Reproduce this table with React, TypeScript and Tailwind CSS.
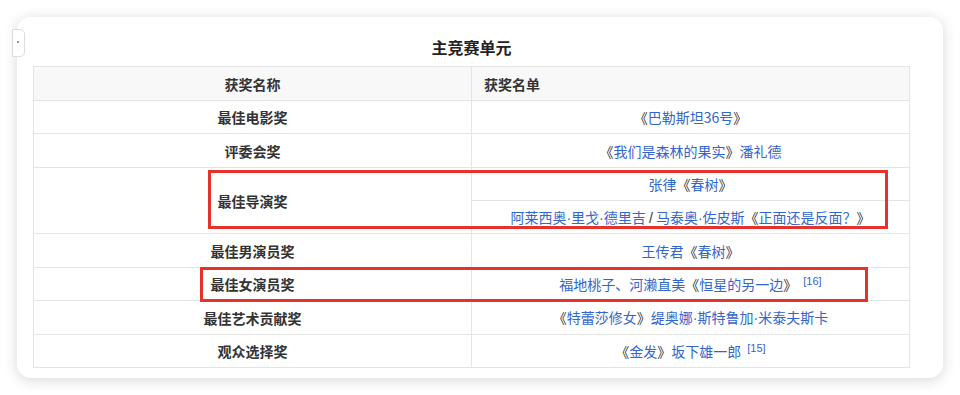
const font = { fontFamily: '"Noto Sans CJK SC", "Noto Sans", sans-serif' };
const latin = { fontFamily: '"Liberation Sans", sans-serif' };

type Part = { t: string; link?: boolean };

const rows: { award: string; lines: Part[][]; sup?: string[] }[] = [
  { award: "最佳电影奖", lines: [[{ t: "《" }, { t: "巴勒斯坦36号", link: true }, { t: "》" }]] },
  {
    award: "评委会奖",
    lines: [[{ t: "《" }, { t: "我们是森林的果实", link: true }, { t: "》" }, { t: "潘礼德", link: true }]],
  },
  {
    award: "最佳导演奖",
    lines: [
      [{ t: "张律", link: true }, { t: "《" }, { t: "春树", link: true }, { t: "》" }],
      [
        { t: "阿莱西奥·里戈·德里吉", link: true },
        { t: " / " },
        { t: "马泰奥·佐皮斯", link: true },
        { t: "《" },
        { t: "正面还是反面？", link: true },
        { t: "》" },
      ],
    ],
  },
  {
    award: "最佳男演员奖",
    lines: [[{ t: "王传君", link: true }, { t: "《" }, { t: "春树", link: true }, { t: "》" }]],
  },
  {
    award: "最佳女演员奖",
    lines: [[{ t: "福地桃子、河濑直美", link: true }, { t: "《" }, { t: "恒星的另一边", link: true }, { t: "》" }]],
    sup: ["[16]"],
  },
  {
    award: "最佳艺术贡献奖",
    lines: [[{ t: "《" }, { t: "特蕾莎修女", link: true }, { t: "》" }, { t: "缇奥娜·斯特鲁加·米泰夫斯卡", link: true }]],
  },
  {
    award: "观众选择奖",
    lines: [[{ t: "《" }, { t: "金发", link: true }, { t: "》" }, { t: "坂下雄一郎", link: true }]],
    sup: ["[15]"],
  },
];

// middle dots and slashes look narrow in the source, so set them in a latin face
function withDots(s: string) {
  return s.split(/([·/])/).map((seg, i) =>
    seg === "·" || seg === "/" ? (
      <span key={i} style={latin}>
        {seg}
      </span>
    ) : (
      seg
    )
  );
}

function Line({ parts, sup }: { parts: Part[]; sup?: string }) {
  return (
    <span>
      {parts.map((p, i) =>
        p.link ? (
          <a key={i} className="text-[#3366cc]">
            {withDots(p.t)}
          </a>
        ) : (
          <span key={i} className="text-[#333]">
            {withDots(p.t)}
          </span>
        )
      )}
      {sup && (
        <sup className="ml-[6px] text-[11px] text-[#3366cc] relative -top-[5px]" style={latin}>
          {sup}
        </sup>
      )}
    </span>
  );
}

export default function App() {
  return (
    <div className="w-[960px] h-[395px] bg-white p-[17px] relative overflow-hidden" style={font}>
      <div className="relative w-[926px] h-[361px] bg-white rounded-[14px] shadow-[0_2px_14px_rgba(0,0,0,0.16)] pl-[16px] pt-[18px]">
        <div className="w-[877px]">
          <div className="text-center text-[16px] leading-[24px] font-bold text-[#222]">主竞赛单元</div>
          <table className="mt-[7px] w-full border-collapse table-fixed text-[14px] leading-[20px]">
            <thead>
              <tr className="h-[34px] bg-[#f8f8f8]">
                <th className="w-1/2 border border-[#e4e4e4] text-center font-bold text-[#333]">获奖名称</th>
                <th className="w-1/2 border border-[#e4e4e4] text-left pl-[12px] font-bold text-[#333]">获奖名单</th>
              </tr>
            </thead>
            <tbody>
              {rows.map((r, ri) =>
                r.lines.map((l, li) => (
                  <tr key={`${ri}-${li}`} className={ri % 2 === 0 ? "h-[33px]" : "h-[34px]"}>
                    {li === 0 && (
                      <td rowSpan={r.lines.length} className="border border-[#e4e4e4] text-center font-bold text-[#333]">
                        {r.award}
                      </td>
                    )}
                    <td className="border border-[#e4e4e4] text-center">
                      <Line parts={l} sup={r.sup?.[li]} />
                    </td>
                  </tr>
                ))
              )}
            </tbody>
          </table>
        </div>
        {/* highlight boxes drawn over the table */}
        <div className="absolute left-[191px] top-[153px] w-[680px] h-[59px] border-[3px] border-[#e5322a]" />
        <div className="absolute left-[183px] top-[250px] w-[668px] h-[35px] border-[3px] border-[#e5322a]" />
      </div>
      <div className="absolute left-[12px] top-[29px] w-[13px] h-[28px] rounded-r-[5px] border border-[#dcdcdc] bg-white">
        <div className="absolute left-[4px] top-[11px] w-[2px] h-[2px] bg-[#999]" />
      </div>
    </div>
  );
}
